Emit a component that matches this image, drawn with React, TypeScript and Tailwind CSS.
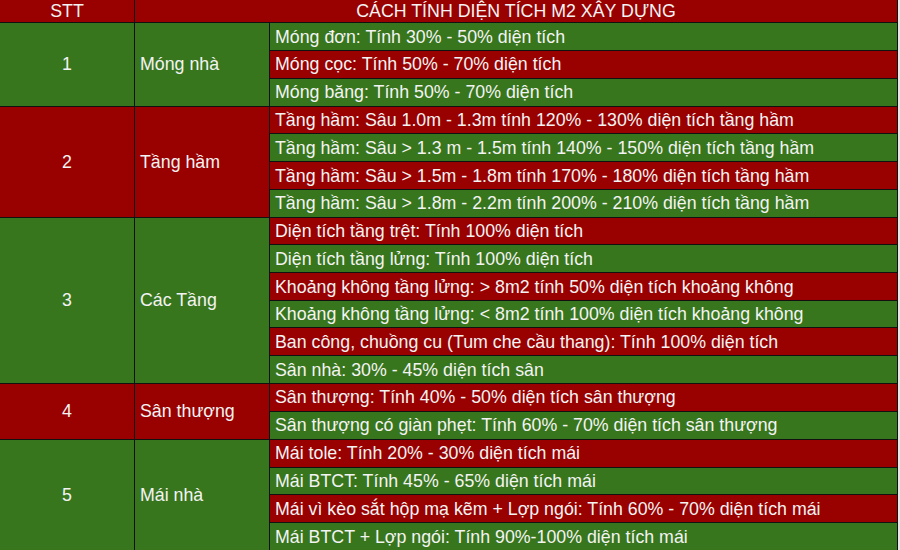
import React from "react";

const R = "bg-[#990000]";
const G = "bg-[#38761d]";

type Group = { stt: string; name: string; color: string; grow: string; rows: [string, string][] };

const groups: Group[] = [
  {
    stt: "1",
    name: "Móng nhà",
    color: G,
    grow: "grow-[3]",
    rows: [
      ["Móng đơn: Tính 30% - 50% diện tích", G],
      ["Móng cọc: Tính 50% - 70% diện tích", R],
      ["Móng băng: Tính 50% - 70% diện tích", G],
    ],
  },
  {
    stt: "2",
    name: "Tầng hầm",
    color: R,
    grow: "grow-[4]",
    rows: [
      ["Tầng hầm: Sâu 1.0m - 1.3m tính 120% - 130% diện tích tầng hầm", R],
      ["Tầng hầm: Sâu > 1.3 m - 1.5m tính 140% - 150% diện tích tầng hầm", G],
      ["Tầng hầm: Sâu > 1.5m - 1.8m tính 170% - 180% diện tích tầng hầm", R],
      ["Tầng hầm: Sâu > 1.8m - 2.2m tính 200% - 210% diện tích tầng hầm", G],
    ],
  },
  {
    stt: "3",
    name: "Các Tầng",
    color: G,
    grow: "grow-[6]",
    rows: [
      ["Diện tích tầng trệt: Tính 100% diện tích", R],
      ["Diện tích tầng lửng: Tính 100% diện tích", G],
      ["Khoảng không tầng lửng: > 8m2 tính 50% diện tích khoảng không", R],
      ["Khoảng không tầng lửng: < 8m2 tính 100% diện tích khoảng không", G],
      ["Ban công, chuồng cu (Tum che cầu thang): Tính 100% diện tích", R],
      ["Sân nhà: 30% - 45% diện tích sân", G],
    ],
  },
  {
    stt: "4",
    name: "Sân thượng",
    color: R,
    grow: "grow-[2]",
    rows: [
      ["Sân thượng: Tính 40% - 50% diện tích sân thượng", R],
      ["Sân thượng có giàn phẹt: Tính 60% - 70% diện tích sân thượng", G],
    ],
  },
  {
    stt: "5",
    name: "Mái nhà",
    color: G,
    grow: "grow-[4]",
    rows: [
      ["Mái tole: Tính 20% - 30% diện tích mái", R],
      ["Mái BTCT: Tính 45% - 65% diện tích mái", G],
      ["Mái vì kèo sắt hộp mạ kẽm + Lợp ngói: Tính 60% - 70% diện tích mái", R],
      ["Mái BTCT + Lợp ngói: Tính 90%-100% diện tích mái", G],
    ],
  },
];

export default function App() {
  return (
    <div className="w-[900px] h-[550px] bg-[#e6e6e6] overflow-hidden font-['Liberation_Sans',Arial,sans-serif] text-[#f3f3f3] text-[17.8px] leading-none">
      <div className="w-[898px] h-[550px] bg-[#111] pr-px flex flex-col gap-px">
        <div className="h-[22px] shrink-0 flex gap-px">
          <div className="w-[134px] shrink-0 bg-[#990000] flex items-center justify-center pt-[2px]">STT</div>
          <div className="flex-1 bg-[#990000] flex items-center justify-center pt-[2px]">
            CÁCH TÍNH DIỆN TÍCH M2 XÂY DỰNG
          </div>
        </div>
        {groups.map((g) => (
          <div key={g.stt} className={`${g.grow} basis-0 flex gap-px min-h-0`}>
            <div className={`${g.color} w-[134px] shrink-0 flex items-center justify-center pt-[2px]`}>{g.stt}</div>
            <div className={`${g.color} w-[134px] shrink-0 flex items-center pl-[5px] pt-[2px]`}>{g.name}</div>
            <div className="flex-1 flex flex-col gap-px">
              {g.rows.map(([t, c], i) => (
                <div key={i} className={`${c} flex-1 basis-0 flex items-center pl-[5px] pt-[2px] whitespace-nowrap`}>
                  {t}
                </div>
              ))}
            </div>
          </div>
        ))}
      </div>
    </div>
  );
}
